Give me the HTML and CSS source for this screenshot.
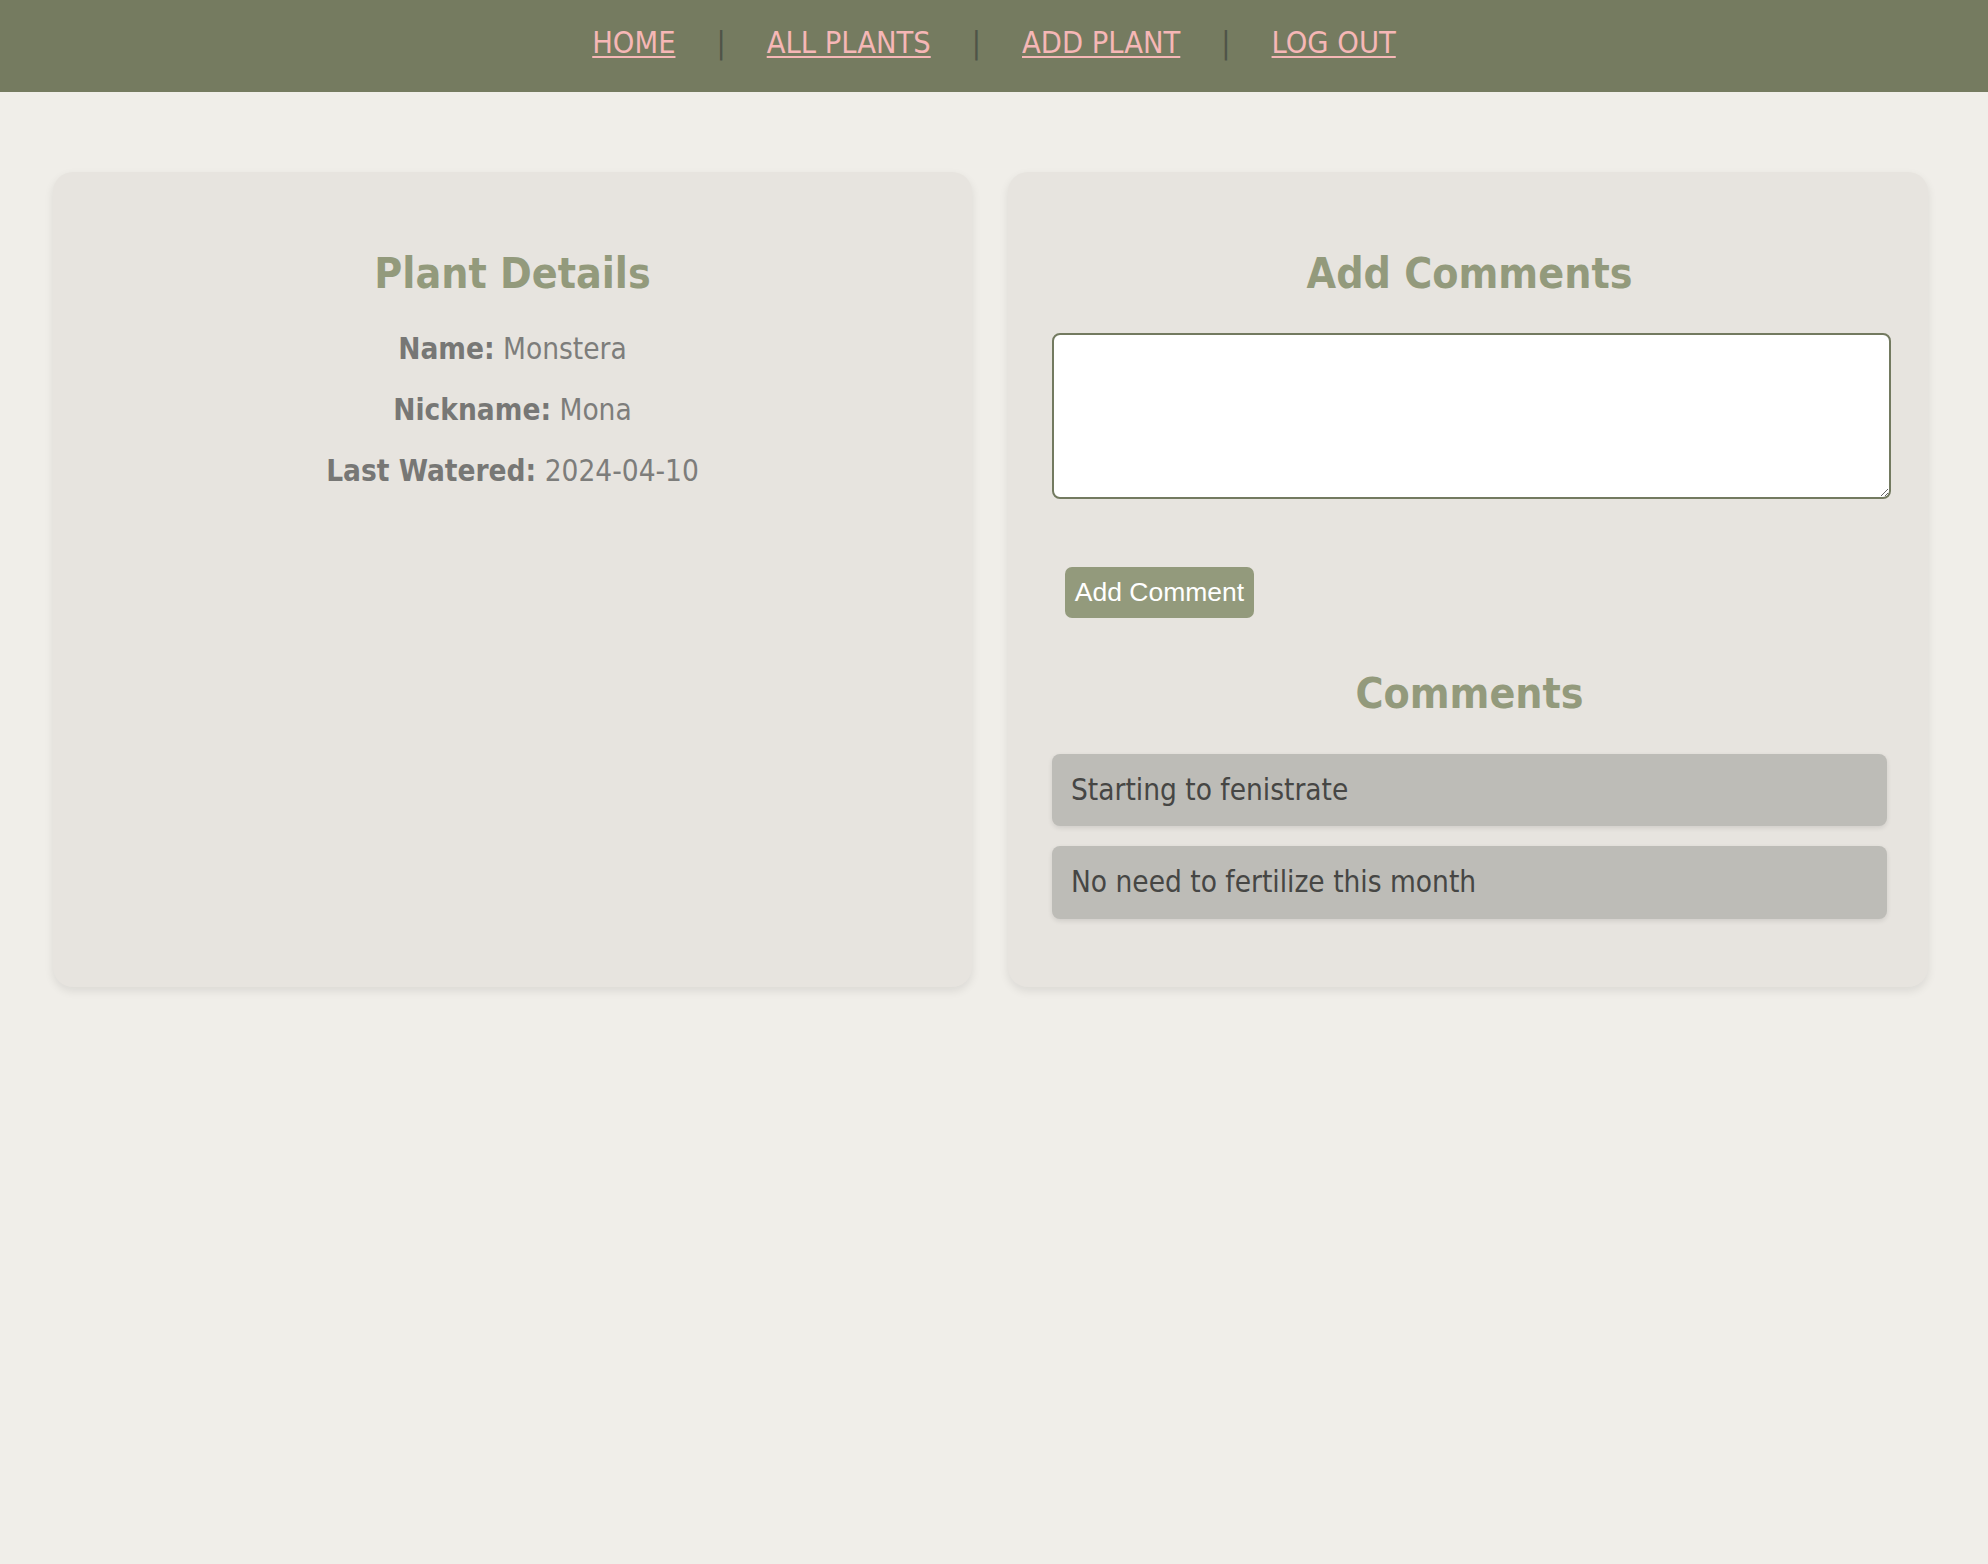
FILE: index.html
```html
<!DOCTYPE html>
<html lang="en">
<head>
<meta charset="utf-8">
<title>Plant Details</title>
<link rel="stylesheet" href="styles.css">
</head>
<body>
<nav class="topnav">
  <a class="nav-link" href="#">HOME</a>
  <span class="nav-sep">|</span>
  <a class="nav-link" href="#">ALL PLANTS</a>
  <span class="nav-sep">|</span>
  <a class="nav-link" href="#">ADD PLANT</a>
  <span class="nav-sep">|</span>
  <a class="nav-link" href="#">LOG OUT</a>
</nav>
<main class="page">
  <section class="card card-details">
    <h2 class="card-title">Plant Details</h2>
    <p class="detail"><strong>Name:</strong> Monstera</p>
    <p class="detail"><strong>Nickname:</strong> Mona</p>
    <p class="detail"><strong>Last Watered:</strong> 2024-04-10</p>
  </section>
  <section class="card card-comments">
    <h2 class="card-title">Add Comments</h2>
    <form class="comment-form">
      <textarea class="comment-input"></textarea>
      <button class="comment-btn" type="button">Add Comment</button>
    </form>
    <h2 class="card-title">Comments</h2>
    <div class="comment">Starting to fenistrate</div>
    <div class="comment">No need to fertilize this month</div>
  </section>
</main>
</body>
</html>
```
FILE: styles.css
```css
html, body {
  margin: 0;
  padding: 0;
}
body {
  background: #f0eee9;
  font-family: "DejaVu Sans Condensed", "DejaVu Sans", sans-serif;
  font-stretch: condensed;
  min-height: 1564px;
}
.topnav {
  background: #757b60;
  height: 92px;
  box-sizing: border-box;
  padding: 25px 0 0;
  display: flex;
  justify-content: center;
  align-items: flex-start;
  gap: 41px;
  font-size: 30.5px;
  line-height: 1.164;
}
.nav-link {
  color: #f6b7b6;
  text-decoration: underline;
  text-decoration-thickness: 2px;
  text-underline-offset: 3px;
}
.nav-sep {
  color: #4f5448;
}
.page {
  display: grid;
  grid-template-columns: 919px 920px;
  column-gap: 36px;
  padding: 80px 0 0 53px;
  align-items: stretch;
}
.card {
  background: #e7e4df;
  border-radius: 20px;
  box-shadow: 0 4px 10px rgba(0, 0, 0, 0.09);
  padding: 42px 41px 68px 44px;
}
.card-details {
  padding-left: 40px;
  padding-right: 40px;
}
.card-title {
  color: #939a7c;
  font-size: 42.5px;
  font-weight: bold;
  line-height: 1.164;
  text-align: center;
  margin: 35px 0;
}
.detail {
  font-size: 29.5px;
  line-height: 1.1;
  color: #7d7d7b;
  text-align: center;
  margin: 28.5px 0;
}
.detail strong {
  color: #777775;
}
.comment-form {
  display: flex;
  flex-direction: column;
  align-items: flex-start;
}
.comment-input {
  box-sizing: border-box;
  width: calc(100% + 4px);
  height: 166px;
  border: 2px solid #737a60;
  border-radius: 8px;
  background: #ffffff;
  margin: 0;
  font-family: inherit;
  font-size: 20px;
}
.comment-btn {
  margin: 68px 0 16px 13px;
  width: 189px;
  height: 51px;
  background: #939a7c;
  color: #ffffff;
  border: none;
  border-radius: 7px;
  font-family: "Liberation Sans", Arial, sans-serif;
  font-size: 26.5px;
  padding: 0;
}
.comment {
  background: #bdbcb7;
  border-radius: 8px;
  box-shadow: 0 2px 5px rgba(0, 0, 0, 0.1);
  color: #464644;
  font-size: 29.5px;
  line-height: 1.1;
  padding: 20px 19px;
  margin-bottom: 20px;
}
.comment:last-child {
  margin-bottom: 0;
}
```
